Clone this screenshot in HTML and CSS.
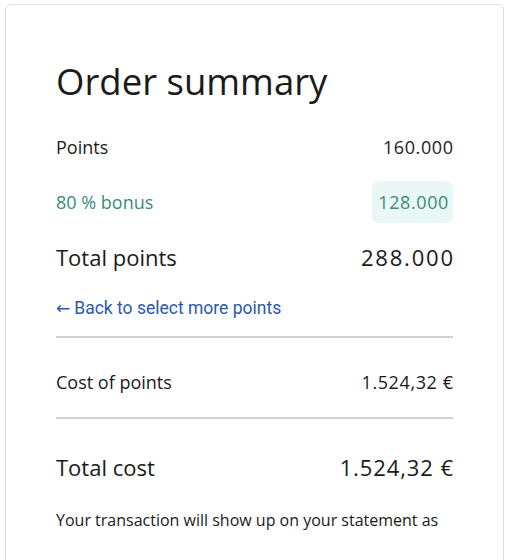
FILE: index.html
```html
<!DOCTYPE html>
<html>
<head>
<meta charset="utf-8">
<link rel="stylesheet" href="styles.css">
</head>
<body>
<div class="card">
  <h1 class="title">Order summary</h1>
  <div class="row points">
    <span>Points</span><span class="val">160.000</span>
  </div>
  <div class="row bonus">
    <span>80 % bonus</span><span class="badge val">128.000</span>
  </div>
  <div class="row total">
    <span>Total points</span><span class="val big">288.000</span>
  </div>
  <a class="back" href="#"><span class="arrow">←</span> Back to select more points</a>
  <hr class="divider">
  <div class="row cost">
    <span>Cost of points</span><span class="val">1.524,32 €</span>
  </div>
  <hr class="divider second">
  <div class="row total totalcost">
    <span>Total cost</span><span class="val bigcost">1.524,32 €</span>
  </div>
  <p class="note">Your transaction will show up on your statement as</p>
</div>
</body>
</html>
```
FILE: styles.css
```css
html, body {
  margin: 0;
  padding: 0;
  background: #fff;
}
body {
  font-family: "Open Sans", "Lato", sans-serif;
  color: #1a1a1a;
  padding: 4px 5px 0 5px;
}
.card {
  border: 1px solid #dde1e6;
  border-radius: 6px;
  padding: 50px 50px 40px 50px;
  min-height: 600px;
}
.title {
  margin: 0 0 25px 0;
  font-weight: 400;
  font-size: 36.5px;
  line-height: 52px;
}
.row {
  display: flex;
  justify-content: space-between;
  align-items: center;
}
.val {
  letter-spacing: 0.6px;
  margin-right: -0.6px;
}
.val.big {
  letter-spacing: 1.8px;
  margin-right: -1.8px;
}
.val.bigcost {
  letter-spacing: 0.9px;
  margin-right: -0.9px;
}
.points {
  font-size: 18px;
  height: 30px;
  margin-bottom: 20px;
}
.bonus {
  font-size: 18px;
  color: #3b8a7c;
  height: 40px;
  margin-bottom: 20px;
}
.badge.val {
  background: #e9f8f6;
  border-radius: 7px;
  padding: 9px 4px 9px 6px;
  margin-right: 0;
}
.total {
  font-size: 22px;
  height: 30px;
}
.back {
  display: flex;
  align-items: center;
  gap: 4px;
  margin-top: 26px;
  font-family: "Roboto", sans-serif;
  font-size: 17.5px;
  color: #2b5aa8;
  text-decoration: none;
  line-height: 20px;
}
.arrow {
  font-family: "DejaVu Sans", sans-serif;
  font-size: 17px;
}
.divider {
  border: none;
  border-top: 2px solid #cdd0d9;
  margin: 18px 0 0 0;
}
.cost {
  font-size: 18px;
  height: 30px;
  margin: 29px 0 0 0;
}
.divider.second {
  margin-top: 20px;
}
.totalcost {
  margin-top: 33px;
}
.note {
  margin: 27px 0 0 0;
  font-size: 16px;
  line-height: 22px;
}
```
